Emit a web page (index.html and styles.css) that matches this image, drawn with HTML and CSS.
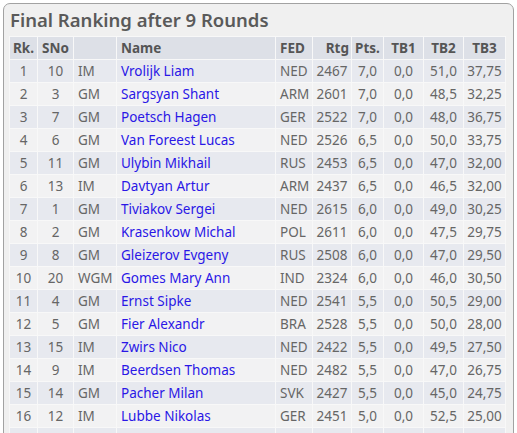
FILE: index.html
```html
<!DOCTYPE html>
<html>
<head>
<meta charset="utf-8">
<link rel="stylesheet" href="styles.css">
</head>
<body>
<div class="panel">
  <h2 class="title">Final Ranking after 9 Rounds</h2>
  <table class="rank">
    <thead>
      <tr>
        <th class="c-rk">Rk.</th>
        <th class="c-sno">SNo</th>
        <th class="c-tit"></th>
        <th class="c-name l">Name</th>
        <th class="c-fed l">FED</th>
        <th class="c-rtg r">Rtg</th>
        <th class="c-pts">Pts.</th>
        <th class="c-tb1">TB1</th>
        <th class="c-tb2">TB2</th>
        <th class="c-tb3">TB3</th>
      </tr>
    </thead>
    <tbody>
      <tr><td>1</td><td>10</td><td class="l">IM</td><td class="l name">Vrolijk Liam</td><td class="l">NED</td><td>2467</td><td>7,0</td><td>0,0</td><td>51,0</td><td>37,75</td></tr>
      <tr><td>2</td><td>3</td><td class="l">GM</td><td class="l name">Sargsyan Shant</td><td class="l">ARM</td><td>2601</td><td>7,0</td><td>0,0</td><td>48,5</td><td>32,25</td></tr>
      <tr><td>3</td><td>7</td><td class="l">GM</td><td class="l name">Poetsch Hagen</td><td class="l">GER</td><td>2522</td><td>7,0</td><td>0,0</td><td>48,0</td><td>36,75</td></tr>
      <tr><td>4</td><td>6</td><td class="l">GM</td><td class="l name">Van Foreest Lucas</td><td class="l">NED</td><td>2526</td><td>6,5</td><td>0,0</td><td>50,0</td><td>33,75</td></tr>
      <tr><td>5</td><td>11</td><td class="l">GM</td><td class="l name">Ulybin Mikhail</td><td class="l">RUS</td><td>2453</td><td>6,5</td><td>0,0</td><td>47,0</td><td>32,00</td></tr>
      <tr><td>6</td><td>13</td><td class="l">IM</td><td class="l name">Davtyan Artur</td><td class="l">ARM</td><td>2437</td><td>6,5</td><td>0,0</td><td>46,5</td><td>32,00</td></tr>
      <tr><td>7</td><td>1</td><td class="l">GM</td><td class="l name">Tiviakov Sergei</td><td class="l">NED</td><td>2615</td><td>6,0</td><td>0,0</td><td>49,0</td><td>30,25</td></tr>
      <tr><td>8</td><td>2</td><td class="l">GM</td><td class="l name">Krasenkow Michal</td><td class="l">POL</td><td>2611</td><td>6,0</td><td>0,0</td><td>47,5</td><td>29,75</td></tr>
      <tr><td>9</td><td>8</td><td class="l">GM</td><td class="l name">Gleizerov Evgeny</td><td class="l">RUS</td><td>2508</td><td>6,0</td><td>0,0</td><td>47,0</td><td>29,50</td></tr>
      <tr><td>10</td><td>20</td><td class="l">WGM</td><td class="l name">Gomes Mary Ann</td><td class="l">IND</td><td>2324</td><td>6,0</td><td>0,0</td><td>46,0</td><td>30,50</td></tr>
      <tr><td>11</td><td>4</td><td class="l">GM</td><td class="l name">Ernst Sipke</td><td class="l">NED</td><td>2541</td><td>5,5</td><td>0,0</td><td>50,5</td><td>29,00</td></tr>
      <tr><td>12</td><td>5</td><td class="l">GM</td><td class="l name">Fier Alexandr</td><td class="l">BRA</td><td>2528</td><td>5,5</td><td>0,0</td><td>50,0</td><td>28,00</td></tr>
      <tr><td>13</td><td>15</td><td class="l">IM</td><td class="l name">Zwirs Nico</td><td class="l">NED</td><td>2422</td><td>5,5</td><td>0,0</td><td>49,5</td><td>27,50</td></tr>
      <tr><td>14</td><td>9</td><td class="l">IM</td><td class="l name">Beerdsen Thomas</td><td class="l">NED</td><td>2482</td><td>5,5</td><td>0,0</td><td>47,0</td><td>26,75</td></tr>
      <tr><td>15</td><td>14</td><td class="l">GM</td><td class="l name">Pacher Milan</td><td class="l">SVK</td><td>2427</td><td>5,5</td><td>0,0</td><td>45,0</td><td>24,75</td></tr>
      <tr><td>16</td><td>12</td><td class="l">IM</td><td class="l name">Lubbe Nikolas</td><td class="l">GER</td><td>2451</td><td>5,0</td><td>0,0</td><td>52,5</td><td>25,00</td></tr>
      <tr><td></td><td></td><td></td><td></td><td></td><td></td><td></td><td></td><td></td><td></td></tr>
    </tbody>
  </table>
</div>
</body>
</html>
```
FILE: styles.css
```css
html, body {
  margin: 0;
  padding: 0;
  background: #ffffff;
}
body {
  padding: 3px 0 0 3px;
  font-family: "Noto Sans", "Open Sans", sans-serif;
  overflow: hidden;
  height: 433px;
  box-sizing: border-box;
}
.panel {
  width: 511px;
  box-sizing: border-box;
  border: 1px solid #a2a2a2;
  border-radius: 7px;
  background: #f0f0f0;
  padding: 4px 0 0 5px;
  height: 470px;
}
.title {
  margin: 0 0 4px 1px;
  font-size: 18.5px;
  font-weight: 600;
  color: #5a5a5a;
  line-height: 24px;
}
.rank {
  table-layout: fixed;
  border-collapse: separate;
  border-spacing: 1px;
  background: #f8f8f8;
  width: 497px;
  font-size: 13.5px;
  color: #666;
}
.rank th, .rank td {
  box-sizing: border-box;
  padding: 0 3px;
  text-align: center;
  white-space: nowrap;
  overflow: hidden;
}
.rank th {
  height: 22px;
  background: #dde0e7;
  color: #555;
  font-weight: 700;
}
.rank td {
  height: 22px;
}
.rank tbody tr:nth-child(odd) td { background: #e7e9ef; }
.rank tbody tr:nth-child(even) td { background: #f2f2f3; }
.rank .l { text-align: left; padding-left: 4px; }
.rank .r { text-align: right; padding-right: 2px; }
.rank .name { color: #2a17e6; }
.c-rk { width: 27px; }
.c-sno { width: 35px; }
.c-tit { width: 42px; }
.c-name { width: 158px; }
.c-fed { width: 36px; }
.c-rtg { width: 38px; }
.c-pts { width: 31px; }
.c-tb1 { width: 39px; }
.c-tb2 { width: 39px; }
.c-tb3 { width: 41px; }
```
